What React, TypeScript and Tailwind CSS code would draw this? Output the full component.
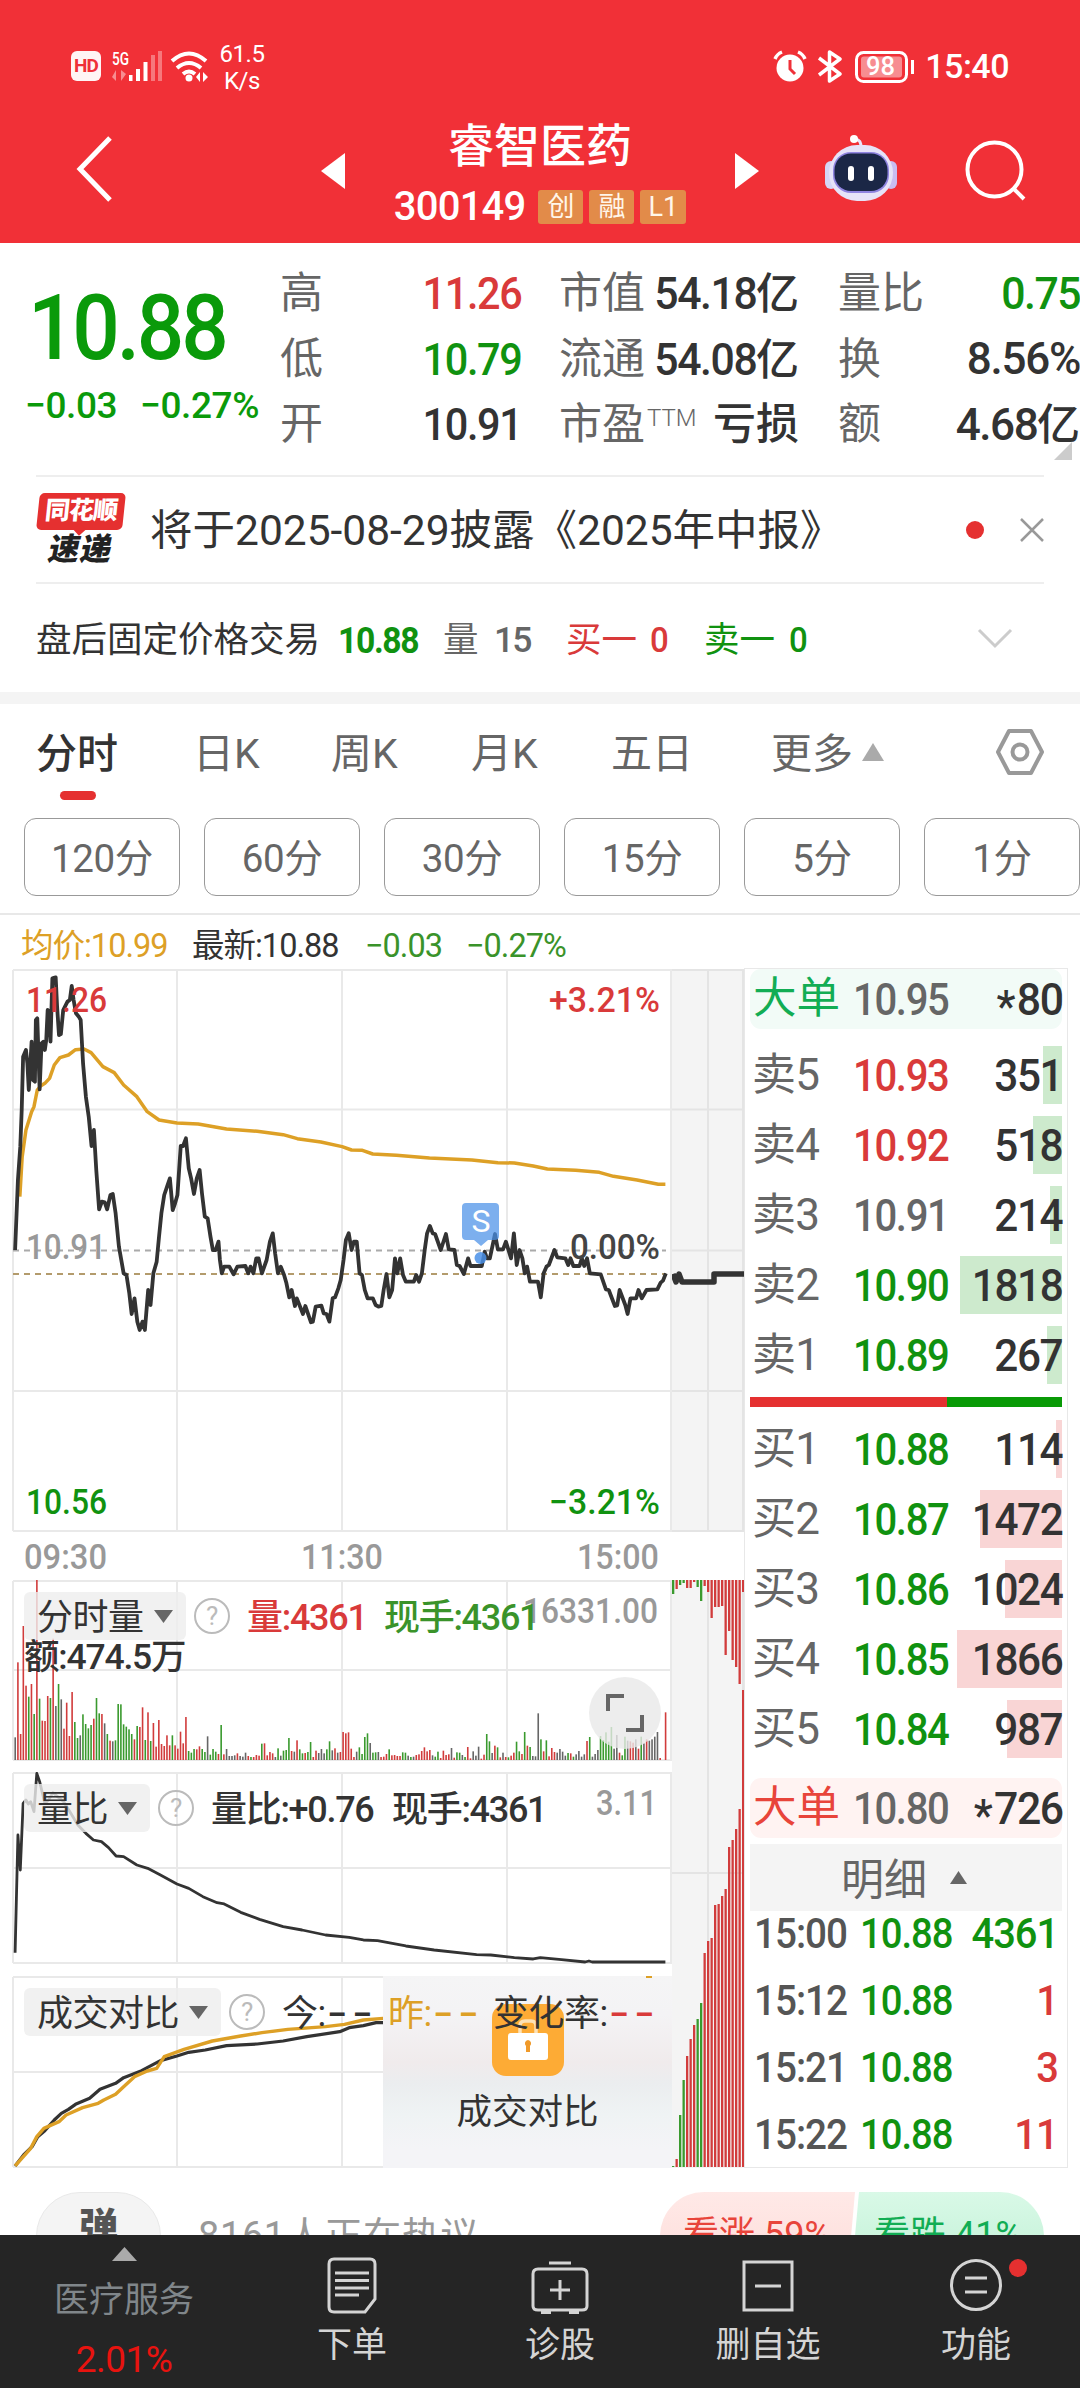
import type { ReactNode } from "react";
import clsx from "clsx";

const RED = "#d93a3a";
const GREEN = "#109210";
const DARK = "#333333";
const ORANGE = "#dda026";

/* ---------- DATA ---------- */

const PRICE =
  "32,900 38,690 43,590 46,480 49,320 55,300 58,340 61,420 64,350 67,275 70,390 74,395 76,210 79,205 81,290 84,418 88,280 92,275 95,300 98,270 101,180 104,185 107,275 111,85 118,82 121,170 125,255 129,252 134,180 143,155 148,150 152,108 156,150 161,190 167,200 171,210 176,340 182,440 188,500 194,588 199,540 204,660 210,778 216,755 222,757 227,778 234,735 239,732 245,790 252,890 262,970 268,975 274,1030 279,1092 285,1045 291,1115 296,1140 302,1115 307,1140 314,1020 319,1065 325,970 332,935 337,860 342,790 348,735 354,710 360,685 366,780 371,760 376,735 383,588 388,588 394,565 400,655 405,685 411,732 417,685 423,660 428,730 434,800 440,805 446,860 451,900 457,900 463,875 466,930 470,970 475,950 486,950 495,973 503,950 520,948 526,970 531,950 537,970 543,925 548,925 555,970 565,930 572,875 578,850 583,910 589,970 595,950 602,975 607,1000 613,1042 618,1020 625,1068 629,1045 642,1092 647,1068 659,1117 663,1115 669,1070 681,1067 686,1090 692,1092 698,1115 705,1045 710,1042 717,1015 722,990 728,930 733,870 739,850 745,900 750,875 756,875 762,970 767,975 773,1020 779,1045 790,1045 796,1065 802,1070 808,1068 813,1020 819,972 825,1042 831,1020 837,925 842,970 848,925 854,975 860,995 877,995 882,975 888,995 894,970 900,900 905,850 911,828 917,850 922,852 934,900 945,852 951,898 963,900 968,945 974,948 983,972 992,925 997,948 1021,948 1027,905 1032,925 1038,925 1049,852 1055,898 1066,898 1072,875 1083,925 1089,850 1095,945 1101,900 1107,925 1112,970 1117,950 1123,995 1140,995 1146,1042 1152,970 1158,950 1163,945 1175,900 1181,922 1198,925 1204,945 1209,925 1215,948 1228,948 1233,925 1238,948 1244,925 1250,970 1273,973 1284,1018 1290,1020 1303,1068 1308,1066 1313,1020 1325,1065 1330,1092 1336,1045 1348,1045 1353,1020 1360,1045 1370,1020 1393,1018 1400,998 1405,992 1411,970";

const AVERAGE =
  "42,740 47,620 55,540 67,485 72,470 79,420 86,408 95,400 105,385 115,345 127,323 145,315 160,299 178,297 193,308 218,350 242,368 262,405 290,440 312,485 337,510 375,519 420,522 480,537 545,544 600,554 630,566 680,576 725,590 745,600 768,601 790,612 840,616 910,624 1000,630 1055,638 1090,639 1130,648 1160,657 1220,661 1270,667 1300,679 1350,690 1395,703 1410,703";

const VOLUME_RATIO =
  "32,578 38,225 43,330 49,130 55,120 60,132 65,125 72,155 78,40 84,65 90,100 95,130 103,120 112,98 122,110 135,125 150,160 165,195 182,220 198,240 215,245 230,263 246,288 262,290 290,315 313,325 340,345 375,372 400,385 430,410 460,428 475,432 510,457 550,478 600,500 640,510 690,525 740,532 770,540 800,542 860,558 920,570 1010,584 1040,585 1090,593 1130,597 1145,593 1190,599 1240,606 1248,603 1255,606 1410,606";

const TODAY =
  "32,1218 50,1185 68,1160 80,1130 95,1112 115,1080 130,1060 145,1048 160,1033 190,1015 212,988 245,970 262,953 300,932 340,902 375,888 400,877 435,870 480,857 545,852 600,843 650,830 720,815 740,803 770,797 797,788 812,788";

const YESTERDAY =
  "32,1218 65,1165 78,1130 93,1105 125,1085 140,1065 175,1043 208,1030 220,1020 245,1003 262,980 285,950 312,933 332,925 348,890 390,868 450,843 510,828 555,818 610,808 690,800 730,793 770,780 812,775";

// one entry per minute: direction + top of the bar
const VOLUME =
  "k502 r277 r492 r168 r347 g380 r342 g432 r30 g386 r452 r453 r378 g384 r206 k408 g342 k388 r476 r398 r498 r366 g456 g504 k496 g433 g462 g475 g465 r446 g384 g430 r432 k460 g492 r512 k514 g511 g402 g403 g463 g470 g478 g492 r508 g468 r471 r412 g510 r427 g513 r459 r530 r450 r522 r528 r496 r526 g496 r526 r536 r485 r520 r441 g543 g548 g537 r538 r529 g537 g546 k499 g554 g537 g545 r552 g465 r553 k537 k558 k558 k556 r550 k558 k560 k548 r558 g561 r561 r555 r557 g521 r520 r556 r546 r550 k561 g535 k557 g542 g540 g504 r543 k545 r511 g538 g550 r549 g546 g516 r561 r542 k549 k537 k550 g538 g514 k541 r535 k548 r546 r486 r490 r487 r536 r561 k545 g532 g552 g501 g490 k519 g548 g547 k546 r561 r560 r552 g538 r556 r555 r558 r558 g547 g548 k557 g561 k560 r555 r553 r543 r532 r544 r540 k556 g560 g545 r564 r542 r555 r553 k534 r563 g547 g548 k555 g561 r531 r565 k544 k557 k530 r566 r554 g492 g514 k549 r527 g532 r562 k548 r561 g562 r557 r548 g515 g544 r552 g486 r527 g531 k558 k559 k430 g508 r544 g511 r559 r534 r546 k548 k537 k545 k557 g549 r550 g560 k553 k543 k560 k553 r513 g501 k560 k552 k540 g498 g510 g487 g515 g471 k536 k495 r548 g556 g500 k512 r514 r518 k508 r536 g500 k520 r508 k512 k508 k500 k486 r564 k570 r427";

const ASK_DEPTH = "g14 r9 g5 g3 r8 r8 r2 g7 g21 r6 r12 r38 r27 r27 r26 r75 r51 r80 r87 r104 r12";
const BID_DEPTH =
  "g1 r8 g52 g87 r111 r128 r142 g148 g164 r214 r226 r229 r262 r263 r271 r278 r320 r327 r338 r358 r477";

const BAR_COLOR: Record<string, string> = { r: "#d13c3c", g: "#3a9a2e", k: "#666666" };

const SELL = [
  { label: "卖5", price: "10.93", tone: "up", qty: "351", bar: 19 },
  { label: "卖4", price: "10.92", tone: "up", qty: "518", bar: 29 },
  { label: "卖3", price: "10.91", tone: "flat", qty: "214", bar: 12 },
  { label: "卖2", price: "10.90", tone: "down", qty: "1818", bar: 102 },
  { label: "卖1", price: "10.89", tone: "down", qty: "267", bar: 15 },
];

const BUY = [
  { label: "买1", price: "10.88", tone: "down", qty: "114", bar: 6 },
  { label: "买2", price: "10.87", tone: "down", qty: "1472", bar: 82 },
  { label: "买3", price: "10.86", tone: "down", qty: "1024", bar: 57 },
  { label: "买4", price: "10.85", tone: "down", qty: "1866", bar: 105 },
  { label: "买5", price: "10.84", tone: "down", qty: "987", bar: 55 },
];

const DEALS = [
  { time: "15:00", qty: "4361", up: false },
  { time: "15:12", qty: "1", up: true },
  { time: "15:21", qty: "3", up: true },
  { time: "15:22", qty: "11", up: true },
];

/* ---------- HEADER ---------- */

const StatusBar = () => (
  <div className="flex h-[108px] items-center pt-[24px] pl-[71px] pr-[71px] text-white">
    <div className="flex h-[30px] w-[30px] items-center justify-center rounded-[6px] bg-white/95 text-[19px] font-bold tracking-[-1px] text-[#ef3038]">
      HD
    </div>
    <svg className="ml-[10px] overflow-visible" width="100" height="34" viewBox="111 48 100 34" fill="#fff">
      <text x="112" y="64" fontSize="18" fontWeight="500" textLength="17" lengthAdjust="spacingAndGlyphs">5G</text>
      <path d="M116 69v11l-4-4zM121 80V69l5 4z" opacity=".45" />
      <rect x="129" y="74" width="3.500" height="6" />
      <rect x="136" y="68" width="4" height="12" />
      <rect x="143.500" y="61" width="4" height="19" />
      <rect x="151" y="54" width="4" height="26" opacity=".35" />
      <rect x="158" y="50" width="4" height="30" opacity=".35" />
      <g fill="none" stroke="#fff" strokeWidth="4">
        <path d="M172 60q17-15 34 0M177 67q12-10 24 0M183 73q6-5 12 0" />
      </g>
      <circle cx="189" cy="77" r="3.500" />
      <path d="M200 71v10l-4-5zM203 81V71l5 5z" />
    </svg>
    <div className="ml-[7px] w-[48px] pt-[3px] text-center text-[24px] leading-[27px] tracking-[-0.5px]">
      61.5
      <br />
      K/s
    </div>
    <svg className="ml-auto" width="142" height="34" viewBox="773 48 142 34" fill="none" stroke="#fff">
      <circle cx="790" cy="67" r="13.500" fill="#fff" stroke="none" />
      <path d="M775 58q2-5 7-7M805 58q-2-5-7-7" strokeWidth="3.500" />
      <path d="M790 59v9l5 5" stroke="#ef3038" strokeWidth="3" />
      <path d="M819 57l21 16-10.500 7V51l10.500 7-21 16" strokeWidth="3.500" strokeLinejoin="round" />
      <rect x="856.500" y="51.500" width="50" height="29" rx="7" strokeWidth="3" />
      <rect x="861" y="55.500" width="41" height="21" rx="3" fill="#fff" fillOpacity=".45" stroke="none" />
      <path d="M912.500 59v14" strokeWidth="3" />
      <text x="866" y="74" fontSize="25" fontWeight="500" fill="#fff" stroke="none" textLength="29" lengthAdjust="spacingAndGlyphs">98</text>
    </svg>
    <span className="ml-[10px] text-[34px] font-medium leading-none tracking-[-0.5px]">15:40</span>
  </div>
);

const Tag = ({ children }: { children: ReactNode }) => (
  <span className="flex h-[34px] min-w-[45px] items-center justify-center rounded-[3px] bg-[#e28b49] px-[8px] text-[27px] text-[#fff6ea]">
    {children}
  </span>
);

const TitleBar = () => (
  <div className="flex h-[135px] items-start">
    <svg className="ml-[74px] mt-[27px]" width="40" height="68" viewBox="0 0 40 68" fill="none" stroke="#fff" strokeWidth="5">
      <path d="M36 3L6 34l30 31" />
    </svg>
    <svg className="ml-[207px] mt-[45px]" width="24" height="36" fill="#fff">
      <path d="M24 0v36L0 18z" />
    </svg>
    <div className="flex w-[390px] flex-col items-center pt-[10px] text-white">
      <h1 className="text-[46px] font-medium leading-[56px]">睿智医药</h1>
      <div className="mt-[14px] flex items-center gap-[6px]">
        <span className="mr-[7px] text-[40px] font-medium leading-[38px] tracking-[-0.8px]">300149</span>
        <Tag>创</Tag>
        <Tag>融</Tag>
        <Tag>L1</Tag>
      </div>
    </div>
    <svg className="mt-[45px]" width="24" height="36" fill="#fff">
      <path d="M0 0v36l24-18z" />
    </svg>
    <svg className="ml-[65px] mt-[26px]" width="74" height="68" viewBox="824 134 74 68">
      <path d="M861 148c0-6-1-8-6-9" fill="none" stroke="#e9e4fb" strokeWidth="3" />
      <circle cx="854" cy="139" r="4" fill="#fff" />
      <rect x="825" y="161" width="12" height="28" rx="6" fill="#d5d6f6" />
      <rect x="885" y="161" width="12" height="28" rx="6" fill="#c9bdf2" />
      <rect x="829" y="145" width="64" height="56" rx="28" fill="#e6e3f8" />
      <rect x="833" y="152" width="56" height="41" rx="18" fill="#8f84e0" />
      <rect x="834.500" y="153.500" width="53" height="37.500" rx="16.500" fill="#1b2746" />
      <rect x="848" y="166" width="6" height="15" rx="3" fill="#fff" />
      <rect x="868" y="166" width="6" height="15" rx="3" fill="#fff" />
    </svg>
    <svg className="ml-[66px] mt-[30px]" width="64" height="64" viewBox="964 138 64 64" fill="none" stroke="#fff" strokeWidth="4">
      <circle cx="994.500" cy="169.500" r="27" />
      <path d="M1013 188l11 11" />
    </svg>
  </div>
);

/* ---------- QUOTE ---------- */

const Quote = () => (
  <section className="relative flex h-[232px] pt-[18px] text-[43px] leading-[65.500px] text-[#333]">
    <div className="w-[280px] text-[#0a9a0a]">
      <div className="origin-left scale-x-[0.93] pl-[30px] pt-[18px] text-[90px] font-medium leading-[100px] tracking-[-3.400px]">
        10.88
      </div>
      <div className="flex pl-[25px] pt-[4px] text-[37px] font-medium leading-[46px] tracking-[-0.4px]">
        <span className="w-[115px]">−0.03</span>
        <span>−0.27%</span>
      </div>
    </div>
    <div className="w-[241px]">
      <Stat label="高"><Num className="scale-x-[0.92] text-[#d93a3a]">11.26</Num></Stat>
      <Stat label="低"><Num className="scale-x-[0.92] text-[#109210]">10.79</Num></Stat>
      <Stat label="开"><Num className="scale-x-[0.92]">10.91</Num></Stat>
    </div>
    <div className="ml-[38px] w-[240px]">
      <Stat label="市值"><Num className="scale-x-[0.95]">54.18</Num>亿</Stat>
      <Stat label="流通"><Num className="scale-x-[0.95]">54.08</Num>亿</Stat>
      <Stat label={<>市盈<sup className="-top-[13px] ml-[2px] text-[24px] font-light leading-none">TTM</sup></>}>亏损</Stat>
    </div>
    <div className="ml-[39px] w-[242px]">
      <Stat label="量比"><Num className="scale-x-[0.95] text-[#109210]">0.75</Num></Stat>
      <Stat label="换"><span className="text-[44px] tracking-[-1.300px]">8.56%</span></Stat>
      <Stat label="额"><Num className="scale-x-[0.98]">4.68</Num>亿</Stat>
    </div>
    <svg className="absolute left-[1054px] top-[199px]" width="18" height="18" fill="#ccc">
      <path d="M18 0v18H0z" />
    </svg>
  </section>
);

// narrow digits, squeezed towards the right edge
const Num = ({ className, children }: { className?: string; children: string }) => (
  <span className={clsx("inline-block origin-right text-[45px] tracking-[-1.500px]", className)}>{children}</span>
);

const Stat = ({ label, children }: { label: ReactNode; children: ReactNode }) => (
  <div className="flex h-[65.500px] justify-between whitespace-nowrap">
    <span className="text-[#666]">{label}</span>
    <span className="-ml-[10px] font-medium">{children}</span>
  </div>
);

const Notice = () => (
  <section className="mx-[36px] flex h-[109px] items-center border-y-2 border-[#eee]">
    <div className="flex w-[90px] flex-col items-center">
      <div className="relative h-[37px] w-[86px] -skew-x-6 rounded-[5px] bg-[#e53030] text-center text-[25px] font-black leading-[36px] tracking-[-1px] text-white">
        同花顺
        <span className="absolute -bottom-[4px] left-[39px] h-[9px] w-[9px] rotate-45 bg-[#e53030]" />
      </div>
      <div className="mt-[4px] -skew-x-12 text-[31px] font-black leading-[32px] tracking-[1px] text-[#222]">速递</div>
    </div>
    <span className="ml-[24px] whitespace-nowrap pt-[3px] text-[42.500px] text-[#333]">将于2025-08-29披露《2025年中报》</span>
    <span className="ml-auto h-[18px] w-[18px] rounded-full bg-[#e53030]" />
    <svg className="ml-[36px]" width="24" height="24" stroke="#999" strokeWidth="2.500">
      <path d="M1 1l22 22M23 1L1 23" />
    </svg>
  </section>
);

const AfterHours = () => (
  <section className="flex h-[108px] items-center whitespace-nowrap pl-[36px] pr-[67px] pt-[6px] text-[35.500px]">
    <span className="w-[302px] text-[#333]">盘后固定价格交易</span>
    <span className="w-[105px] origin-left scale-x-[0.91] text-[37px] font-bold tracking-[-1.500px] text-[#109210]">10.88</span>
    <span className="w-[51px] text-[#666]">量</span>
    <span className="w-[72px] font-medium tracking-[-2px] text-[#666]">15</span>
    <span className="w-[84px] text-[#d93a3a]">买一</span>
    <span className="w-[54px] origin-left scale-x-[0.93] font-medium text-[#d93a3a]">0</span>
    <span className="w-[85px] text-[#109210]">卖一</span>
    <span className="origin-left scale-x-[0.93] font-medium text-[#109210]">0</span>
    <svg className="-mt-[4px] ml-auto" width="36" height="22" fill="none" stroke="#ccc" strokeWidth="3">
      <path d="M2 2l16 16L34 2" />
    </svg>
  </section>
);

const Tabs = () => (
  <nav className="flex h-[114px] items-start pl-[36px] pt-[22px] text-[41px] leading-[56px] text-[#666]">
    <div className="flex w-[157px] flex-col items-start font-medium text-[#333]">
      分时
      <span className="ml-[24px] mt-[9px] h-[9px] w-[36px] rounded-[5px] bg-[#e53030]" />
    </div>
    <span className="w-[138px]">日K</span>
    <span className="w-[140px]">周K</span>
    <span className="w-[140px]">月K</span>
    <span className="w-[160px]">五日</span>
    <span>更多</span>
    <svg className="ml-[9px] mt-[17px]" width="22" height="18" fill="#aaa">
      <path d="M11 0l11 18H0z" />
    </svg>
    <svg className="ml-auto mr-[34px] mt-[2px]" width="52" height="48" fill="none" stroke="#999" strokeWidth="4" strokeLinejoin="round">
      <path d="M15 3h22l11 21-11 21H15L4 24z" />
      <circle cx="26" cy="24" r="7.500" />
    </svg>
  </nav>
);

const Periods = () => (
  <div className="flex h-[97px] gap-[24px] border-b-2 border-[#e8e8e8] pl-[24px]">
    {["120分", "60分", "30分", "15分", "5分", "1分"].map((p) => (
      <button
        key={p}
        className="h-[78px] w-[156px] shrink-0 rounded-[12px] border-[1.500px] border-[#999] pt-[4px] text-[38.500px] tracking-[-0.4px] text-[#666]"
      >
        {p}
      </button>
    ))}
  </div>
);

/* ---------- CHARTS ---------- */

type LabelProps = { x: number; y: number; w: number; fill: string; size?: number; children: string };

const Label = ({ x, y, w, fill, size = 35, children }: LabelProps) => (
  <text x={x} y={y} fill={fill} fontSize={size} fontWeight="500" textLength={w} lengthAdjust="spacingAndGlyphs">
    {children}
  </text>
);

const Grid = ({ top, bottom, rows }: { top: number; bottom: number; rows: number[] }) => (
  <g stroke="#e9e9e9" strokeWidth="2" fill="none">
    <path d={`M13 ${top}H672M13 ${bottom}H672`} />
    {rows.map((y) => (
      <path key={y} d={`M13 ${y}H672`} />
    ))}
    {[13, 177, 342, 507, 671].map((x) => (
      <path key={x} d={`M${x} ${top}V${bottom}`} />
    ))}
  </g>
);

const Line = ({ points, color, oy, width = 3 }: { points: string; color: string; oy: number; width?: number }) => (
  <g transform={`translate(0 ${oy}) scale(0.4719 0.33333)`}>
    <polyline
      points={points}
      fill="none"
      stroke={color}
      strokeWidth={width}
      strokeLinejoin="round"
      vectorEffect="non-scaling-stroke"
    />
  </g>
);

const PriceChart = () => (
  <svg className="block" width="672" height="612" viewBox="0 968 672 612">
    <Grid top={970} bottom={1531} rows={[1109.5, 1391]} />
    <path d="M13 1250.500H666" stroke="#aaa" strokeWidth="2" strokeDasharray="6 5" />
    <path d="M13 1274H666" stroke="#b39b6c" strokeWidth="2" strokeDasharray="6 5" />
    <Line points={AVERAGE} color={ORANGE} oy={950} width={3.5} />
    <Line points={PRICE} color={DARK} oy={950} width={3.8} />
    <Label x={26} y={1012} w={81} fill={RED}>11.26</Label>
    <Label x={549} y={1012} w={111} fill={RED}>+3.21%</Label>
    <Label x={26} y={1259} w={80} fill="#999">10.91</Label>
    <Label x={570} y={1259} w={90} fill="#444">0.00%</Label>
    <Label x={26} y={1514} w={81} fill={GREEN}>10.56</Label>
    <Label x={549} y={1514} w={111} fill={GREEN}>−3.21%</Label>
    <Label x={24} y={1569} w={83} fill="#999">09:30</Label>
    <Label x={301} y={1569} w={82} fill="#999">11:30</Label>
    <Label x={577} y={1569} w={82} fill="#999">15:00</Label>
    <g fill="#4a90e8">
      <path d="M466 1203h29q4 0 4 4v29q0 4-4 4h-7l-7 6-7-6h-8q-4 0-4-4v-29q0-4 4-4z" opacity=".72" />
      <circle cx="480.500" cy="1258" r="6" opacity=".85" />
    </g>
    <text x="481" y="1232" fontSize="32" fill="#fff" textAnchor="middle">S</text>
  </svg>
);

// pill with indicator name and the help mark next to it
const IndicatorName = ({ children, width }: { children: string; width: string }) => (
  <>
    <span className={clsx("flex h-[48px] items-center rounded-[6px] bg-[#eeeeee]/80 pl-[13px]", width)}>
      <span className="pt-[3px]">{children}</span>
      <svg className="ml-[10px]" width="19" height="13" fill="#666">
        <path d="M0 0h19L9.500 13z" />
      </svg>
    </span>
    <span className="ml-[8px] mr-[17px] flex h-[36px] w-[36px] items-center justify-center rounded-full border-[2.500px] border-[#bbb] text-[26px] leading-none text-[#bbb]">
      ?
    </span>
  </>
);

const ChartHeader = ({ children }: { children: ReactNode }) => (
  <div className="absolute left-[24px] top-[12px] flex h-[48px] items-center whitespace-nowrap text-[36px] tracking-[-0.5px] text-[#333]">
    {children}
  </div>
);

const VolumeChart = () => (
  <div className="relative h-[192px]">
    <svg className="block" width="672" height="192" viewBox="0 1580 672 192">
      <Grid top={1581} bottom={1760} rows={[1670]} />
      {VOLUME.split(" ").map((bar, i) => {
        const h = (570 - Number(bar.slice(1))) / 3;
        return <rect key={i} x={14.4 + i * 2.71} y={1760 - h} width="1.600" height={h} fill={BAR_COLOR[bar[0]]} />;
      })}
      <Label x={523} y={1623} w={135} fill="#999">16331.00</Label>
    </svg>
    <ChartHeader>
      <IndicatorName width="w-[162px]">分时量</IndicatorName>
      <span className="w-[137px] pt-[3px] font-medium tracking-[-1.300px] text-[#d93a3a]">量:4361</span>
      <span className="pt-[3px] font-medium tracking-[-1.300px] text-[#3a932a]">现手:4361</span>
    </ChartHeader>
    <span className="absolute left-[24px] top-[57px] whitespace-nowrap text-[35.500px] font-medium leading-[40px] tracking-[-1.200px] text-[#333]">
      额:474.5万
    </span>
    <svg className="absolute left-[589px] top-[97px]" width="72" height="72" fill="none" stroke="#666" strokeWidth="4">
      <circle cx="36" cy="36" r="36" fill="#e9e9e9" fillOpacity=".8" stroke="none" />
      <path d="M19 34V19h16M53 38v15H37" />
    </svg>
  </div>
);

const RatioChart = () => (
  <div className="relative h-[204px]">
    <svg className="block" width="672" height="204" viewBox="0 1772 672 204">
      <Grid top={1773} bottom={1963} rows={[1868]} />
      <Line points={VOLUME_RATIO} color={DARK} oy={1760} width={2.8} />
      <Label x={596} y={1815} w={61} fill="#999">3.11</Label>
    </svg>
    <ChartHeader>
      <IndicatorName width="w-[126px]">量比</IndicatorName>
      <span className="w-[181px] pt-[3px] font-medium tracking-[-1.300px]">量比:+0.76</span>
      <span className="pt-[3px] font-medium tracking-[-1.300px]">现手:4361</span>
    </ChartHeader>
  </div>
);

const CompareChart = () => (
  <div className="relative h-[192px]">
    <svg className="block" width="672" height="192" viewBox="0 1976 672 192">
      <Grid top={1977} bottom={2167} rows={[2072]} />
      <Line points={TODAY} color={DARK} oy={1760} width={3.2} />
      <Line points={YESTERDAY} color={ORANGE} oy={1760} width={3.4} />
    </svg>
    <div className="absolute left-[383px] top-0 flex h-[192px] w-[289px] flex-col items-center bg-[linear-gradient(#f5f5f6_0%,#f4f3f5_20%,#f0ebec_45%,#ebedef_56%,#eff3f4_72%,#f4f4f7_90%)] pt-[28px]">
      <svg width="72" height="72" viewBox="0 0 72 72">
        <rect width="72" height="72" rx="14" fill="#fdab35" />
        <path d="M28 30v-8q0-5 5-5h6q5 0 5 5v8" fill="none" stroke="#fde2b5" strokeWidth="3.500" />
        <rect x="16" y="29" width="40" height="27" rx="3" fill="#fff" />
        <path d="M36 36a3.500 3.500 0 0 1 2 6v6h-4v-6a3.500 3.500 0 0 1 2-6z" fill="#f09a2a" />
      </svg>
      <span className="mt-[12px] text-[35.500px] leading-[48px] text-[#333]">成交对比</span>
    </div>
    <span className="absolute left-[646px] top-0 h-[2px] w-[6px] bg-[#dda026]" />
    <ChartHeader>
      <IndicatorName width="w-[197px]">成交对比</IndicatorName>
      <span className="w-[106px] pt-[3px]">今:<Dashes /></span>
      <span className="w-[105px] pt-[3px] text-[#dda026]">昨:<Dashes /></span>
      <span className="pt-[3px]">变化率:<Dashes className="text-[#d93a3a]" /></span>
    </ChartHeader>
  </div>
);

const Dashes = ({ className }: { className?: string }) => (
  <span className={clsx("inline-block origin-left scale-x-[1.6] pl-[1px] font-medium tracking-[3.500px]", className)}>--</span>
);

// queue depth strip between the charts and the order book
const DepthStrip = () => (
  <svg className="block shrink-0" width="72" height="1200" viewBox="672 968 72 1200">
    <path d="M672 970h72v561h-72zM672 1580h72v588h-72z" fill="#f4f4f4" />
    <path
      d="M672 970h72M672 1109.500h72M672 1250.500h72M672 1391h72M672 1531h72M708 970v561M708 1580v587M672 1873h72M743 970v561M743 1580v587"
      stroke="#e4e4e4"
      strokeWidth="2"
    />
    <path
      d="M673 1274l3 8 3-8 3 8 1 0h31v-8h30"
      fill="none"
      stroke={DARK}
      strokeWidth="5.500"
      strokeLinejoin="round"
    />
    {ASK_DEPTH.split(" ").map((bar, i) => (
      <rect key={i} x={672 + i * 3.5} y="1580" width="2.300" height={Number(bar.slice(1))} fill={BAR_COLOR[bar[0]]} />
    ))}
    {BID_DEPTH.split(" ").map((bar, i) => {
      const h = Number(bar.slice(1));
      return <rect key={i} x={672 + i * 3.5} y={2167 - h} width="2.300" height={h} fill={BAR_COLOR[bar[0]]} />;
    })}
  </svg>
);

/* ---------- ORDER BOOK ---------- */

const tones: Record<string, string> = {
  up: "text-[#d93a3a]",
  down: "text-[#109210]",
  flat: "text-[#666]",
};

type Level = { label: string; price: string; tone: string; qty: string; bar: number };

const BookRow = ({ row, barColor }: { row: Level; barColor: string }) => (
  <div className="relative flex h-[58px] items-center pl-[2px] pr-[1px] text-[45px] tracking-[-1.500px]">
    <span className={clsx("absolute right-0 top-0 h-full", barColor)} style={{ width: row.bar }} />
    <span className="w-[101px] text-[44px] tracking-[-0.8px] text-[#666]">{row.label}</span>
    <span className={clsx("relative origin-left scale-x-[0.89] font-medium", tones[row.tone])}>{row.price}</span>
    <span className="relative ml-auto -mr-[1.500px] origin-right scale-x-[0.94] font-medium text-[#333]">{row.qty}</span>
  </div>
);

const BigOrder = ({ price, qty, className }: { price: string; qty: string; className: string }) => (
  <div className={clsx("flex h-[60px] items-center rounded-[11px] pl-[3px] pr-[1px] text-[45px] tracking-[-1.500px]", className)}>
    <span className="w-[100px] whitespace-nowrap text-[43.500px] tracking-normal">大单</span>
    <span className="origin-left scale-x-[0.89] font-medium text-[#666]">{price}</span>
    <span className="ml-auto -mr-[1.500px] flex origin-right scale-x-[0.95] font-medium text-[#333]">
      <span className="relative top-[7px] mr-[3px]">*</span>
      {qty}
    </span>
  </div>
);

const OrderBook = () => (
  <div className="h-[1200px] w-[324px] border-[1.500px] border-[#e8e8e8] px-[5px] leading-none">
    <BigOrder price="10.95" qty="80" className="bg-[#f2fbf7] text-[#12ad54]" />
    <div className="mt-[17px] flex flex-col gap-[12px]">
      {SELL.map((row) => (
        <BookRow key={row.label} row={row} barColor="bg-[#cdeacd]" />
      ))}
    </div>
    <div className="my-[13px] flex h-[10px]">
      <span className="w-[197px] bg-[#e53030]" />
      <span className="flex-1 bg-[#099a06]" />
    </div>
    <div className="flex flex-col gap-[12px]">
      {BUY.map((row) => (
        <BookRow key={row.label} row={row} barColor="bg-[#f9d5d5]" />
      ))}
    </div>
    <div className="mt-[20px]">
      <BigOrder price="10.80" qty="726" className="bg-[#fff3f2] text-[#e8443a]" />
    </div>
    <div className="mt-[6px] flex h-[67px] items-center bg-[#f4f4f4] pl-[91px] text-[43px] text-[#666]">
      <span className="pt-[6px]">明细</span>
      <svg className="ml-[23px]" width="17" height="13" fill="#666">
        <path d="M8.500 0L17 13H0z" />
      </svg>
    </div>
    <div className="-mt-[11px]">
      {DEALS.map((deal) => (
        <div key={deal.time} className="flex h-[67px] items-center pl-[4px] pr-[4px] text-[42px] font-medium tracking-[-1.100px]">
          <span className="w-[106px] origin-left scale-x-[0.92] text-[#555]">{deal.time}</span>
          <span className="origin-left scale-x-[0.91] text-[#109210]">10.88</span>
          <span className={clsx("ml-auto origin-right scale-x-[0.95]", deal.up ? "text-[#d93a3a]" : "text-[#109210]")}>
            {deal.qty}
          </span>
        </div>
      ))}
    </div>
  </div>
);

/* ---------- FOOTER ---------- */

const Discussion = () => (
  <div className="flex h-[67px] items-start overflow-hidden pl-[36px] pr-[36px] pt-[24px]">
    <div className="flex h-[88px] w-[125px] shrink-0 justify-center rounded-[44px] border border-[#e9e9e9] bg-[#f4f4f4] pt-[13px] text-[39px] font-black leading-[44px] text-[#555]">
      弹
    </div>
    <span className="ml-[37px] mt-[19px] text-[38px] leading-[50px] tracking-[0.6px] text-[#999]">8161人正在热议</span>
    <div className="ml-auto flex text-[36px] leading-[50px]">
      <div className="h-[88px] w-[195px] rounded-l-[44px] bg-linear-to-b from-[#ffe9e7] to-[#fddcd9] pl-[23px] pt-[18px] text-[#e8443a] [clip-path:polygon(0_0,100%_0,96%_100%,0_100%)]">
        看涨 59%
      </div>
      <div className="h-[88px] w-[189px] rounded-r-[44px] bg-linear-to-b from-[#d9f9e7] to-[#bff0d5] pl-[19px] pt-[18px] text-[#12ad54] [clip-path:polygon(4px_0,100%_0,100%_100%,-4px_100%)]">
        看跌 41%
      </div>
    </div>
  </div>
);

const NavItem = ({ label, children }: { label: string; children: ReactNode }) => (
  <div className="flex w-[208px] flex-col items-center pt-[20px] text-[35px] leading-[46px] text-[#d4d4d4]">
    <svg width="60" height="60" viewBox="0 0 60 60" fill="none" stroke="#d4d4d4" strokeWidth="3">
      {children}
    </svg>
    <span className="mt-[8px]">{label}</span>
  </div>
);

const BottomNav = () => (
  <footer className="flex h-[153px] bg-[#252525]">
    <div className="flex w-[248px] flex-col items-center pt-[12px]">
      <svg width="25" height="14" fill="#aaa">
        <path d="M12.500 0L25 14H0z" />
      </svg>
      <span className="mt-[16px] text-[35px] leading-[48px] text-[#80868a]">医疗服务</span>
      <span className="mt-[11px] text-[37px] leading-[48px] tracking-[-0.5px] text-[#e8130f]">2.01%</span>
    </div>
    <NavItem label="下单">
      <path d="M12 4h36q5 0 5 5v35L43 57H12q-5 0-5-5V9q0-5 5-5z" />
      <path d="M13 18h34M13 25.500h34M13 33h34M13 40h24" />
    </NavItem>
    <NavItem label="诊股">
      <path d="M19 8h22M8 14h44q5 0 5 5v32q0 4-5 4H8q-5 0-5-4V19q0-5 5-5zM30 25v20M20 35h20" />
      <path d="M11 57h10M39 57h10" strokeWidth="4" />
    </NavItem>
    <NavItem label="删自选">
      <path d="M6 7h48v48H6zM17 31h26" />
    </NavItem>
    <div className="relative">
      <NavItem label="功能">
        <circle cx="30" cy="30" r="24.500" />
        <path d="M19 23h22M19 37h22" />
      </NavItem>
      <span className="absolute left-[137px] top-[24px] h-[18px] w-[18px] rounded-full bg-[#e53030]" />
    </div>
  </footer>
);

const App = () => {
  return (
    <main className="h-[2388px] w-[1080px] overflow-hidden bg-white font-[Roboto,'Noto_Sans_CJK_SC',sans-serif]">
      <header className="bg-[#f13037]">
        <StatusBar />
        <TitleBar />
      </header>

      <Quote />
      <Notice />
      <AfterHours />
      <div className="h-[12px] bg-[#f4f4f4]" />
      <Tabs />
      <Periods />

      {/* LEGEND */}
      <div className="flex h-[53px] items-center whitespace-nowrap pl-[21px] pt-[9px] text-[32.500px] leading-none tracking-[-1px]">
        <span className="w-[171px] text-[#dda026]">均价:10.99</span>
        <span className="w-[173px] text-[#333]">最新:10.88</span>
        <span className="w-[101px] text-[#3a932a]">−0.03</span>
        <span className="text-[#3a932a]">−0.27%</span>
      </div>

      {/* CHARTS + ORDER BOOK */}
      <section className="flex h-[1200px]">
        <div className="w-[672px] shrink-0">
          <PriceChart />
          <VolumeChart />
          <RatioChart />
          <CompareChart />
        </div>
        <DepthStrip />
        <OrderBook />
      </section>

      <Discussion />
      <BottomNav />
    </main>
  );
};

export default App;
